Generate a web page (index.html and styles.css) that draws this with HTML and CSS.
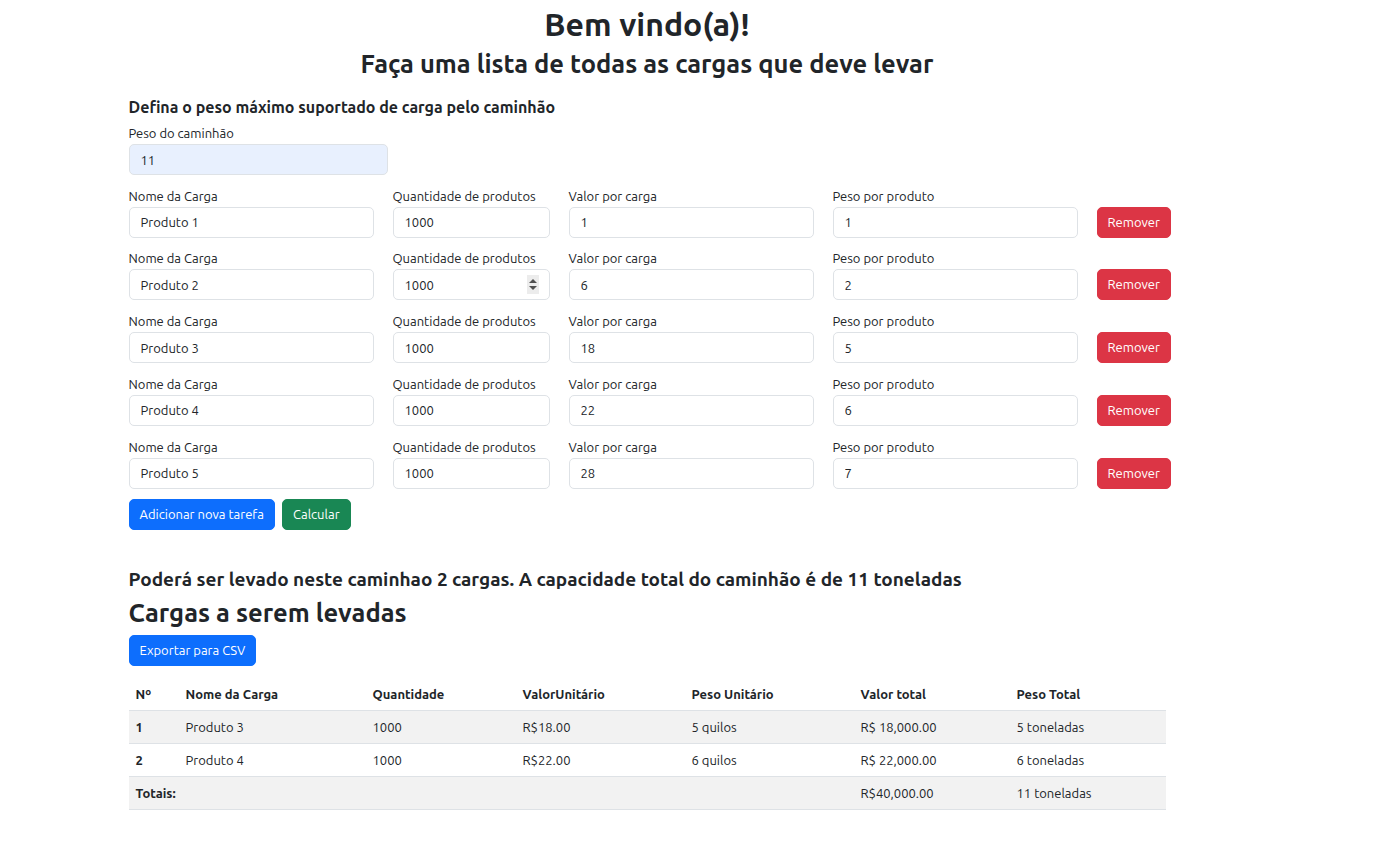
FILE: index.html
```html
<!DOCTYPE html>
<html lang="pt-BR">
<head>
<meta charset="utf-8">
<title>Cargas</title>
<link rel="stylesheet" href="styles.css">
</head>
<body>
<div class="container">
  <div class="main">
    <h1 class="title">Bem vindo(a)!</h1>
    <h3 class="subtitle">Faça uma lista de todas as cargas que deve levar</h3>

    <h5 class="section-title">Defina o peso máximo suportado de carga pelo caminhão</h5>
    <div class="field truck">
      <label class="label">Peso do caminhão</label>
      <input class="input autofill" type="text" value="11">
    </div>

    <div class="cargo-row">
      <div class="field f-name"><label class="label">Nome da Carga</label><input class="input" type="text" value="Produto 1"></div>
      <div class="field f-qty"><label class="label">Quantidade de produtos</label><input class="input" type="text" value="1000"></div>
      <div class="field f-val"><label class="label">Valor por carga</label><input class="input" type="text" value="1"></div>
      <div class="field f-weight"><label class="label">Peso por produto</label><input class="input" type="text" value="1"></div>
      <button class="btn btn-danger">Remover</button>
    </div>
    <div class="cargo-row">
      <div class="field f-name"><label class="label">Nome da Carga</label><input class="input" type="text" value="Produto 2"></div>
      <div class="field f-qty"><label class="label">Quantidade de produtos</label>
        <div class="input-wrap"><input class="input" type="text" value="1000"><span class="spinner"><span class="arrow-up"></span><span class="arrow-down"></span></span></div>
      </div>
      <div class="field f-val"><label class="label">Valor por carga</label><input class="input" type="text" value="6"></div>
      <div class="field f-weight"><label class="label">Peso por produto</label><input class="input" type="text" value="2"></div>
      <button class="btn btn-danger">Remover</button>
    </div>
    <div class="cargo-row">
      <div class="field f-name"><label class="label">Nome da Carga</label><input class="input" type="text" value="Produto 3"></div>
      <div class="field f-qty"><label class="label">Quantidade de produtos</label><input class="input" type="text" value="1000"></div>
      <div class="field f-val"><label class="label">Valor por carga</label><input class="input" type="text" value="18"></div>
      <div class="field f-weight"><label class="label">Peso por produto</label><input class="input" type="text" value="5"></div>
      <button class="btn btn-danger">Remover</button>
    </div>
    <div class="cargo-row">
      <div class="field f-name"><label class="label">Nome da Carga</label><input class="input" type="text" value="Produto 4"></div>
      <div class="field f-qty"><label class="label">Quantidade de produtos</label><input class="input" type="text" value="1000"></div>
      <div class="field f-val"><label class="label">Valor por carga</label><input class="input" type="text" value="22"></div>
      <div class="field f-weight"><label class="label">Peso por produto</label><input class="input" type="text" value="6"></div>
      <button class="btn btn-danger">Remover</button>
    </div>
    <div class="cargo-row">
      <div class="field f-name"><label class="label">Nome da Carga</label><input class="input" type="text" value="Produto 5"></div>
      <div class="field f-qty"><label class="label">Quantidade de produtos</label><input class="input" type="text" value="1000"></div>
      <div class="field f-val"><label class="label">Valor por carga</label><input class="input" type="text" value="28"></div>
      <div class="field f-weight"><label class="label">Peso por produto</label><input class="input" type="text" value="7"></div>
      <button class="btn btn-danger">Remover</button>
    </div>

    <div class="actions">
      <button class="btn btn-primary">Adicionar nova tarefa</button>
      <button class="btn btn-success">Calcular</button>
    </div>

    <h4 class="result">Poderá ser levado neste caminhao 2 cargas. A capacidade total do caminhão é de 11 toneladas</h4>
    <h3 class="table-title">Cargas a serem levadas</h3>
    <button class="btn btn-primary">Exportar para CSV</button>

    <table class="table">
      <thead>
        <tr>
          <th class="c-num">Nº</th>
          <th class="c-name">Nome da Carga</th>
          <th class="c-qty">Quantidade</th>
          <th class="c-unit">ValorUnitário</th>
          <th class="c-wunit">Peso Unitário</th>
          <th class="c-total">Valor total</th>
          <th class="c-wtotal">Peso Total</th>
        </tr>
      </thead>
      <tbody>
        <tr class="striped">
          <th>1</th><td>Produto 3</td><td>1000</td><td>R$18.00</td><td>5 quilos</td><td>R$ 18,000.00</td><td>5 toneladas</td>
        </tr>
        <tr>
          <th>2</th><td>Produto 4</td><td>1000</td><td>R$22.00</td><td>6 quilos</td><td>R$ 22,000.00</td><td>6 toneladas</td>
        </tr>
        <tr class="striped">
          <th colspan="5">Totais:</th><td>R$40,000.00</td><td>11 toneladas</td>
        </tr>
      </tbody>
    </table>
  </div>
</div>
</body>
</html>
```

FILE: styles.css
```css
* { box-sizing: border-box; }

html, body {
  margin: 0;
  padding: 0;
  background: #ffffff;
}

body {
  font-family: Ubuntu, Roboto, "Liberation Sans", sans-serif;
  font-size: 13px;
  line-height: 21px;
  color: #212529;
}

.container {
  max-width: 1140px;
  margin: 0 auto;
  padding: 3px 12px 40px;
}

.main {
  width: 1037px;
}

h1, h3, h4, h5 {
  margin: 0;
  font-weight: 600;
}

.title {
  font-size: 32px;
  line-height: 42px;
  text-align: center;
  margin-bottom: 4px;
}

.subtitle {
  font-size: 25.5px;
  line-height: 30px;
  text-align: center;
}

.section-title {
  font-size: 16px;
  line-height: 21px;
  margin-top: 18px;
  margin-bottom: 5px;
}

.field {
  display: flex;
  flex-direction: column;
  flex: 0 0 auto;
}

.label {
  display: block;
  line-height: 21px;
}

.input {
  display: block;
  width: 100%;
  height: 31px;
  padding: 4px 11px;
  font: inherit;
  color: #212529;
  background: #ffffff;
  border: 1px solid #dee2e6;
  border-radius: 5px;
  outline: none;
}

.autofill {
  background: #e8f0fe;
}

.truck {
  width: 259px;
  margin-bottom: 10.5px;
}

.cargo-row {
  display: flex;
  align-items: flex-end;
  gap: 19px;
  margin-bottom: 10.75px;
}

.f-name, .f-val, .f-weight { width: 245px; }
.f-qty { width: 157px; }

.input-wrap {
  position: relative;
}

.spinner {
  position: absolute;
  right: 11px;
  top: 6px;
  width: 12px;
  height: 19px;
  background: #ececec;
  display: flex;
  flex-direction: column;
  align-items: center;
  justify-content: center;
  gap: 3px;
}

.arrow-up {
  width: 0;
  height: 0;
  border-left: 4px solid transparent;
  border-right: 4px solid transparent;
  border-bottom: 4px solid #505050;
}

.arrow-down {
  width: 0;
  height: 0;
  border-left: 4px solid transparent;
  border-right: 4px solid transparent;
  border-top: 4px solid #505050;
}

.btn {
  display: inline-block;
  height: 31px;
  padding: 4px 10px;
  font: inherit;
  line-height: 21px;
  color: #ffffff;
  border: 1px solid transparent;
  border-radius: 5px;
  white-space: nowrap;
}

.btn-danger { background: #dc3545; border-color: #dc3545; }
.btn-primary { background: #0d6efd; border-color: #0d6efd; }
.btn-success { background: #198754; border-color: #198754; }

.cargo-row .btn { flex: 0 0 auto; }

.actions {
  display: flex;
  gap: 7px;
  margin-top: 2px;
}

.result {
  font-size: 19px;
  line-height: 25px;
  margin-top: 37px;
  margin-bottom: 6px;
}

.table-title {
  font-size: 25.5px;
  line-height: 30px;
  margin-bottom: 7px;
}

.table {
  width: 1037px;
  margin-top: 12px;
  border-collapse: collapse;
  table-layout: fixed;
}

.table th, .table td {
  padding: 5.5px 7px;
  text-align: left;
  vertical-align: top;
  border-bottom: 1px solid #dee2e6;
  line-height: 21px;
}

.table th { font-weight: 700; }
.table td { font-weight: 400; }

.striped th, .striped td {
  background: #f2f2f2;
}

.c-num { width: 50px; }
.c-name { width: 187px; }
.c-qty { width: 150px; }
.c-unit { width: 169px; }
.c-wunit { width: 169px; }
.c-total { width: 156px; }
.c-wtotal { width: 156px; }
```
